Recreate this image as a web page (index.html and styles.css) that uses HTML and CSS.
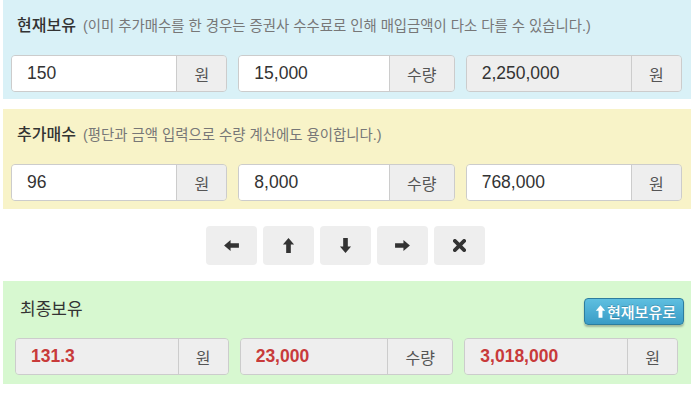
FILE: index.html
```html
<!DOCTYPE html>
<html lang="ko">
<head>
    <meta charset="UTF-8">
    <title>물타기 계산기</title>
    <link rel="stylesheet" href="styles.css">
</head>
<body>
    <div class="wrap">
        <!-- 현재보유 -->
        <div class="panel panel-info">
            <div class="panel-title"><strong>현재보유</strong> <small>(이미 추가매수를 한 경우는 증권사 수수료로 인해 매입금액이 다소 다를 수 있습니다.)</small></div>
            <div class="row">
                <div class="input-group"><input type="text" value="150"><span class="addon addon-won">원</span></div>
                <div class="input-group"><input type="text" value="15,000"><span class="addon addon-qty">수량</span></div>
                <div class="input-group"><input type="text" value="2,250,000" readonly><span class="addon addon-won">원</span></div>
            </div>
        </div>

        <!-- 추가매수 -->
        <div class="panel panel-warning">
            <div class="panel-title"><strong>추가매수</strong> <small>(평단과 금액 입력으로 수량 계산에도 용이합니다.)</small></div>
            <div class="row">
                <div class="input-group"><input type="text" value="96"><span class="addon addon-won">원</span></div>
                <div class="input-group"><input type="text" value="8,000"><span class="addon addon-qty">수량</span></div>
                <div class="input-group"><input type="text" value="768,000"><span class="addon addon-won">원</span></div>
            </div>
        </div>

        <!-- 이동 버튼 -->
        <div class="tools">
            <button class="tool-btn" title="왼쪽">
                <svg width="15" height="13" viewBox="0 0 16 14"><path d="M0 7 L7 1 L7 4.5 L16 4.5 L16 9.5 L7 9.5 L7 13 Z" fill="#333"/></svg>
            </button>
            <button class="tool-btn" title="위">
                <svg width="13" height="15" viewBox="0 0 14 16"><path d="M7 0 L13 7 L9.5 7 L9.5 16 L4.5 16 L4.5 7 L1 7 Z" fill="#333"/></svg>
            </button>
            <button class="tool-btn" title="아래">
                <svg width="13" height="15" viewBox="0 0 14 16"><path d="M7 16 L13 9 L9.5 9 L9.5 0 L4.5 0 L4.5 9 L1 9 Z" fill="#333"/></svg>
            </button>
            <button class="tool-btn" title="오른쪽">
                <svg width="15" height="13" viewBox="0 0 16 14"><path d="M16 7 L9 1 L9 4.5 L0 4.5 L0 9.5 L9 9.5 L9 13 Z" fill="#333"/></svg>
            </button>
            <button class="tool-btn" title="초기화">
                <svg width="13" height="13" viewBox="0 0 14 14"><path d="M2 2 L12 12 M12 2 L2 12" stroke="#333" stroke-width="4" stroke-linecap="round"/></svg>
            </button>
        </div>

        <!-- 최종보유 -->
        <div class="panel panel-success">
            <div class="result-head">
                <span class="result-title">최종보유</span>
                <button class="btn-info">
                    <svg width="11" height="13" viewBox="0 0 14 16"><path d="M7 0 L13 7 L9.5 7 L9.5 16 L4.5 16 L4.5 7 L1 7 Z" fill="#fff"/></svg>현재보유로
                </button>
            </div>
            <div class="row">
                <div class="input-group result"><input type="text" value="131.3" readonly><span class="addon addon-won">원</span></div>
                <div class="input-group result"><input type="text" value="23,000" readonly><span class="addon addon-qty">수량</span></div>
                <div class="input-group result"><input type="text" value="3,018,000" readonly><span class="addon addon-won">원</span></div>
            </div>
        </div>
    </div>
</body>
</html>
```

FILE: styles.css
```css
body {
    margin: 0;
    font-family: 'Liberation Sans', 'Noto Sans CJK KR', sans-serif;
    color: #333;
    background: #fff;
}
.wrap {
    width: 688px;
    padding-left: 3px;
}
.panel {
    padding: 0 9px 7px 8px;
    margin-bottom: 10px;
}
.panel-info {
    background: #d9f1f7;
}
.panel-warning {
    background: #f8f3c8;
    padding-bottom: 8px;
}
.panel-success {
    background: #d7f8d0;
    padding: 16px 13px 9px 12px;
    margin-top: 16px;
}
.panel-title {
    padding: 16px 0 0 6px;
    height: 21px;
    line-height: 20px;
    margin-bottom: 18px;
    font-size: 15px;
    white-space: nowrap;
}
.panel-title strong {
    font-weight: 500;
    font-size: 16px;
    color: #333;
    margin-right: 3px;
}
.panel-title small {
    font-size: 14.4px;
    color: #777;
}
.row {
    display: grid;
    grid-template-columns: 1fr 1fr 1fr;
    gap: 11px;
}
.input-group {
    display: flex;
    height: 37px;
    border: 1px solid #ccc;
    border-radius: 4px;
    box-sizing: border-box;
    overflow: hidden;
    box-shadow: inset 0 1px 1px rgba(0, 0, 0, 0.075);
}
.input-group input {
    flex: 1;
    min-width: 0;
    border: none;
    outline: none;
    padding: 0 15px;
    font-family: 'Liberation Sans', 'Noto Sans CJK KR', sans-serif;
    font-size: 17.5px;
    color: #333;
    background: #fff;
}
.input-group input[readonly] {
    background: #eee;
}
.addon {
    display: flex;
    align-items: center;
    justify-content: center;
    background: #eee;
    border-left: 1px solid #ccc;
    color: #555;
    font-size: 16px;
}
.addon-won {
    width: 49px;
}
.addon-qty {
    width: 64px;
}
.result input {
    color: #c83a3a;
    font-weight: bold;
}
/* 이동 버튼 */
.tools {
    display: flex;
    justify-content: center;
    gap: 6px;
    padding: 7px 4px 0 0;
}
.tool-btn {
    width: 51px;
    height: 39px;
    border: none;
    border-radius: 4px;
    background: #eee;
    display: flex;
    align-items: center;
    justify-content: center;
    padding: 0;
    cursor: pointer;
}
.result-head {
    display: flex;
    justify-content: space-between;
    align-items: center;
    height: 28px;
    margin-bottom: 13px;
    padding-left: 5px;
}
.result-title {
    font-size: 17px;
    color: #333;
    margin-top: -8px;
}
.btn-info {
    height: 27px;
    margin-right: -6px;
    padding: 0 7px 0 10px;
    display: flex;
    align-items: center;
    gap: 1px;
    border: 1px solid #2d7d9e;
    border-radius: 4px;
    background: linear-gradient(#5ebfe0, #3a9cc6);
    box-shadow: 0 2px 2px rgba(0, 0, 0, 0.25);
    color: #fff;
    font-family: 'Liberation Sans', 'Noto Sans CJK KR', sans-serif;
    font-size: 15px;
    font-weight: 500;
    text-shadow: 0 -1px 0 rgba(0, 0, 0, 0.2);
    cursor: pointer;
}
```
